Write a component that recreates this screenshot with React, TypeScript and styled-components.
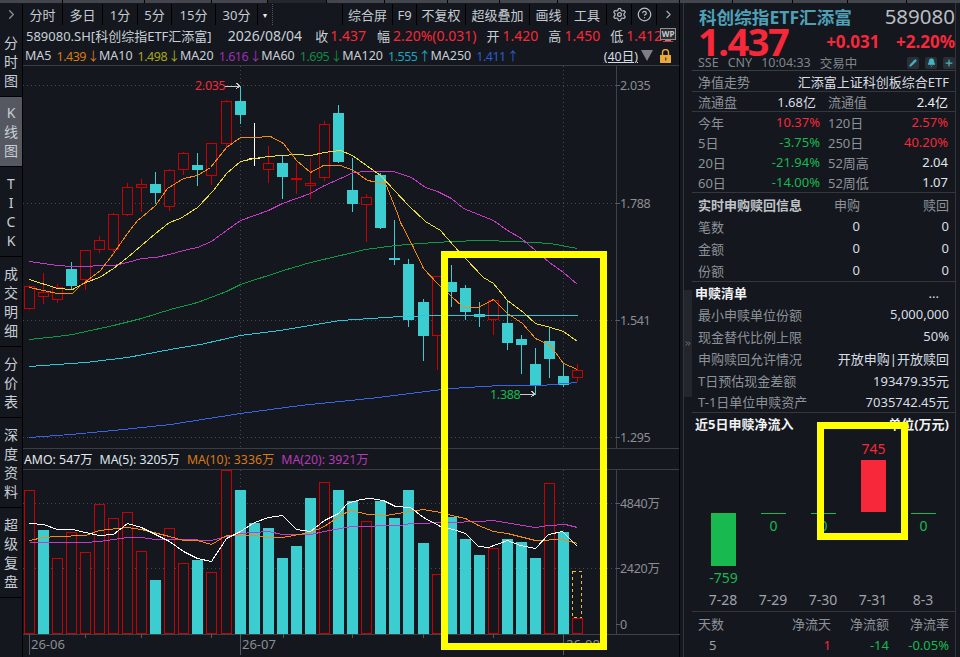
import { Fragment } from 'react'
import styled, { createGlobalStyle } from 'styled-components'
import { ChevronRight, ChevronsRight, CircleHelp, Settings, Pencil, Bell, Plus } from 'lucide-react'

const BG = '#14171d'
const RED = '#f7283a'
const GREEN = '#18b94f'
const TEAL = '#3bcdcf'
const CANDLE_RED = '#cc0000'

const GlobalStyle = createGlobalStyle`
  html, body { margin: 0; padding: 0; background: ${BG}; }
  body { width: 960px; height: 657px; overflow: hidden; font-family: "Noto Sans", "Noto Sans CJK SC", sans-serif; }
`

const Page = styled.div`
  position: relative;
  width: 960px;
  height: 657px;
  overflow: hidden;
  background: ${BG};
  color: #d5dbe2;
`
const TopStrip = styled.div`
  display: flex;
  height: 3px;
  gap: 1px;
  background: #000;
`
const StripTab = styled.div<{ $w: number; $dark?: boolean }>`
  width: ${p => p.$w}px;
  background: ${p => (p.$dark ? '#23262c' : '#43464c')};
`
const Workspace = styled.div`
  display: flex;
  height: 654px;
`
const LeftPane = styled.div`
  width: 680px;
  display: flex;
  flex-direction: column;
`
const Toolbar = styled.div`
  display: flex;
  align-items: center;
  height: 21px;
  margin-top: 1px;
  font-size: 13px;
  color: #c6ccd3;
`
const ToolButton = styled.div<{ $w: number }>`
  width: ${p => p.$w}px;
  height: 100%;
  display: flex;
  align-items: center;
  justify-content: center;
  border-right: 1px solid #000;
  box-sizing: border-box;
  flex: none;
`
const MenuCaret = styled.div`
  width: 14px;
  text-align: center;
  font-size: 8px;
  border-right: 1px dotted #555;
  height: 100%;
  line-height: 21px;
  color: #eee;
`
const ToolSpacer = styled.div`
  flex: 1;
  height: 100%;
  border-right: 1px solid #000;
`
const Body = styled.div`
  flex: 1;
  display: flex;
  min-height: 0;
`
const Sidebar = styled.div`
  width: 22px;
  flex: none;
  padding-top: 1px;
  border-right: 1px solid #000;
`
const SideTab = styled.div<{ $h: number; $active?: boolean }>`
  height: ${p => p.$h}px;
  box-sizing: border-box;
  display: flex;
  flex-direction: column;
  align-items: center;
  justify-content: center;
  border-bottom: 1px solid #000;
  background: ${p => (p.$active ? '#555860' : 'transparent')};
  color: #c8ced6;
  font-size: 14px;
`
const SideChar = styled.span`
  height: 19px;
  line-height: 19px;
`
const ChartColumn = styled.div`
  flex: 1;
  min-width: 0;
  border-right: 1px solid #000;
`
const InfoRow = styled.div`
  display: flex;
  align-items: center;
  height: 21px;
  padding-left: 3px;
  font-size: 14px;
  white-space: nowrap;
  position: relative;
`
const MaRow = styled.div`
  display: flex;
  align-items: center;
  height: 20px;
  box-sizing: border-box;
  padding-left: 2px;
  font-size: 12.5px;
  white-space: nowrap;
  border-bottom: 1px solid #3a3d42;
`
const Tag = styled.span<{ $c?: string; $gap?: number; $size?: number }>`
  color: ${p => p.$c || '#c8d0d8'};
  margin-left: ${p => p.$gap || 0}px;
  ${p => (p.$size ? `font-size: ${p.$size}px;` : '')}
`
const MaValue = styled(Tag)`
  letter-spacing: -0.5px;
`
const TrendArrow = styled.span`
  display: inline-block;
  width: 6px;
  letter-spacing: -3px;
  margin-left: 1px;
`
const RangeLabel = styled.span`
  margin-left: auto;
  color: #d5dbe2;
  text-decoration: underline;
  font-size: 12.5px;
`
const RangeCaret = styled.span`
  width: 0;
  height: 0;
  margin: 0 7px 0 3px;
  border-left: 6px solid transparent;
  border-right: 6px solid transparent;
  border-top: 11px solid #7d7f83;
`
const LockHolder = styled.span`
  margin-right: 8px;
  display: flex;
`
const WpBadge = styled.svg`
  position: absolute;
  right: 3px;
  top: 3px;
`
const PlotSvg = styled.svg`
  display: block;
`
const Legend = styled.div`
  display: flex;
  align-items: center;
  height: 20px;
  padding-left: 1px;
  font-size: 12.3px;
  border-top: 1px solid #3a3d42;
  border-bottom: 1px solid #3a3d42;
  white-space: nowrap;
`
const RightPane = styled.div`
  width: 273px;
  margin-left: 3px;
  border-left: 1px solid #32353b;
  border-right: 1px solid #32353b;
  display: flex;
  position: relative;
  box-sizing: border-box;
  flex: none;
`
const CollapseTab = styled.div`
  width: 8px;
  margin-top: 287px;
  height: 107px;
  background: #23262c;
  color: #9a9ea4;
  display: flex;
  align-items: center;
  justify-content: center;
  flex: none;
`
const RightContent = styled.div`
  flex: 1;
  min-width: 0;
  font-size: 13px;
`
const QuoteHead = styled.div`
  height: 68px;
  padding-left: 6px;
  border-bottom: 1px solid #3a3d42;
  box-sizing: border-box;
`
const NameRow = styled.div`
  display: flex;
  align-items: center;
  justify-content: space-between;
  height: 24px;
  padding-top: 1px;
`
const FundName = styled.div`
  font-size: 17.6px;
  font-weight: 700;
  color: #4fa0b6;
  white-space: nowrap;
  margin-left: 1px;
`
const FundCode = styled.div`
  font-size: 20.5px;
  color: #b9bdc2;
`
const PriceRow = styled.div`
  display: flex;
  align-items: center;
  height: 27px;
`
const BigPrice = styled.div`
  font-size: 38px;
  line-height: 27px;
  font-weight: 700;
  color: ${RED};
  letter-spacing: -1.5px;
`
const Change = styled.div<{ $left: string }>`
  font-size: 17px;
  font-weight: 700;
  color: ${RED};
  margin-left: ${p => p.$left};
  white-space: nowrap;
`
const StatusRow = styled.div`
  display: flex;
  align-items: center;
  height: 15px;
  color: #7f858c;
  font-size: 12.5px;
  gap: 9px;
`
const StatusIcons = styled.div`
  margin-left: auto;
  display: flex;
  gap: 6px;
`
const IconChip = styled.div`
  width: 12px;
  height: 12px;
  display: flex;
  align-items: center;
  justify-content: center;
  background: #2a2e35;
  color: #42b5c8;
  border-radius: 2px;
`
const Block = styled.div<{ $rule?: boolean }>`
  padding: 0 6px;
  ${p => (p.$rule ? 'border-bottom: 1px solid #34373c;' : '')}
`
const Row = styled.div<{ $h?: number; $inset?: number }>`
  display: flex;
  align-items: center;
  justify-content: space-between;
  height: ${p => p.$h || 22}px;
  padding-right: ${p => p.$inset || 0}px;
  color: #d9dee4;
  white-space: nowrap;
`
const Label = styled.span<{ $strong?: boolean; $c?: string }>`
  color: ${p => p.$c || (p.$strong ? '#f0f2f4' : '#8d9299')};
  font-weight: ${p => (p.$strong ? 700 : 400)};
  white-space: nowrap;
`
const SectionTitle = styled(Label)`
  margin-left: -3px;
`
const Value = styled.span<{ $c?: string }>`
  color: ${p => p.$c || '#d9dee4'};
`
const MoreDots = styled.span`
  color: #d9dee4;
  margin-right: 10px;
`
const Stats = styled.div<{ $h: number }>`
  display: grid;
  grid-template-columns: 122px 1fr;
  column-gap: 8px;
  grid-auto-rows: ${p => p.$h}px;
  padding-right: 1px;
`
const ThreeCols = styled.div`
  display: grid;
  grid-template-columns: 100px 62px 89px;
  grid-auto-rows: 22px;
  align-items: center;
  text-align: right;
  & > *:nth-child(3n + 1) {
    text-align: left;
  }
`
const NetChart = styled.div`
  display: grid;
  grid-template-columns: repeat(5, 50px);
  height: 158px;
  text-align: center;
  font-size: 14px;
`
const NetColumn = styled.div<{ $top: number; $c: string }>`
  padding: ${p => p.$top}px 12px 0 13px;
  color: ${p => p.$c};
  display: flex;
  flex-direction: column;
  line-height: 16px;
`
const NetValue = styled.span<{ $before?: number; $after?: number }>`
  margin-top: ${p => p.$before || 0}px;
  margin-bottom: ${p => p.$after || 0}px;
  margin-left: -12px;
  margin-right: -12px;
`
const NetBar = styled.div<{ $h: number; $c: string }>`
  height: ${p => p.$h}px;
  background: ${p => p.$c};
`
const NetAxis = styled.div`
  display: grid;
  grid-template-columns: repeat(5, 50px);
  height: 20px;
  line-height: 18px;
  font-size: 14px;
  text-align: center;
  color: #a0a4aa;
  border-bottom: 1px solid #34373c;
  margin: 0 -6px;
  padding: 0 6px;
`
const FlowTable = styled.div`
  display: grid;
  grid-template-columns: 1fr 58px 58px 60px;
  grid-auto-rows: 21px;
  align-items: center;
  text-align: right;
  padding-top: 1px;
  & > *:nth-child(4n + 1) {
    text-align: left;
  }
`
const DayCount = styled.span`
  padding-left: 11px;
  color: #a0a4aa;
`
const Highlight = styled.div<{ $x: number; $y: number; $w: number; $h: number }>`
  position: absolute;
  left: ${p => p.$x}px;
  top: ${p => p.$y}px;
  width: ${p => p.$w}px;
  height: ${p => p.$h}px;
  box-sizing: border-box;
  border: 7px solid #ffff00;
  pointer-events: none;
`

type Candle = ['r' | 't' | 'w', number, number, number, number]

// kind, body top, body bottom, wick top, wick bottom
const candles: Candle[] = [
  ['r', 286, 308, 285, 310], ['r', 292, 296, 273, 304], ['r', 287, 299, 284, 303], ['t', 269, 286, 262, 289],
  ['r', 250, 279, 250, 290], ['r', 240, 249, 236, 253], ['r', 214, 249, 213, 252], ['r', 187, 214, 183, 216],
  ['r', 184, 187, 179, 212], ['t', 184, 193, 172, 204], ['r', 170, 206, 169, 211], ['r', 153, 169, 152, 175],
  ['t', 165, 170, 153, 186], ['r', 143, 175, 143, 185], ['r', 101, 143, 100, 148], ['t', 101, 115, 86, 124],
  ['w', 158, 159, 123, 166], ['r', 163, 169, 146, 183], ['t', 163, 177, 155, 199], ['r', 178, 179, 163, 194],
  ['r', 183, 185, 158, 199], ['r', 124, 177, 121, 181], ['t', 113, 162, 105, 163], ['t', 190, 204, 158, 212],
  ['r', 197, 204, 194, 242], ['t', 175, 228, 173, 229], ['t', 258, 260, 220, 265], ['t', 264, 320, 259, 327],
  ['t', 302, 336, 299, 361], ['r', 276, 335, 276, 370], ['t', 282, 292, 265, 307], ['t', 288, 312, 285, 320],
  ['t', 314, 317, 302, 327], ['r', 300, 319, 299, 335], ['t', 323, 343, 301, 350], ['t', 339, 345, 335, 374],
  ['t', 364, 385, 348, 395], ['t', 341, 359, 327, 378], ['t', 376, 385, 363, 387], ['r', 370, 377, 364, 382],
]

const volumes: ['r' | 't', number][] = [
  ['r', 490], ['t', 530], ['r', 558], ['r', 532], ['r', 552], ['r', 504], ['r', 518], ['r', 512], ['r', 551], ['t', 580],
  ['r', 528], ['r', 563], ['t', 560], ['r', 572], ['r', 470], ['t', 490], ['t', 523], ['t', 528], ['t', 558], ['t', 546],
  ['t', 498], ['r', 482], ['t', 490], ['t', 501], ['r', 521], ['t', 501], ['t', 518], ['t', 490], ['t', 543], ['r', 574],
  ['t', 517], ['t', 539], ['t', 555], ['r', 548], ['t', 539], ['t', 542], ['t', 558], ['r', 483], ['t', 532], ['r', 618],
]

const priceLines: [string, string][] = [
  ['#0d9a45', '29,339 57,336 72,334 113,325 141,318 170,309 197,302 226,291 240,284 283,270 310,262 340,255 365,249 395,245 420,243 451,241 480,240 515,241 550,243 577,248'],
  ['#2ac6da', '29,366 57,364 85,362 127,357 170,349 200,344 240,335 280,330 310,325 340,320 400,316 440,315 577,315'],
  ['#3566e6', '29,437 70,434 113,430 170,424 240,413 300,405 340,401 378,397 410,393 450,388 500,385 540,385 577,382'],
  ['#c43cc4', '29,261 57,265 72,266 113,265 127,262 141,258 155,257 169,254 183,250 197,247 211,241 226,230 240,220 268,210 282,203 310,193 324,185 340,178 353,172 366,171 393,171 411,177 425,187 437,191 451,198 463,208 493,220 507,230 521,238 535,250 549,262 563,272 577,284'],
  ['#ecdc3c', '29,279 57,288 72,289 85,282 99,277 113,268 127,257 141,245 155,233 169,222 180,218 197,207 213,190 226,173 240,161 254,158 268,156 282,155 296,154 310,155 324,152 340,150 352,155 366,165 380,175 394,190 408,205 425,221 440,230 453,245 465,258 483,277 493,283 507,300 523,312 535,323 550,327 563,331 577,341'],
  ['#f58a12', '29,287 57,293 72,293 80,285 100,270 113,253 127,233 137,220 141,217 155,205 167,188 183,178 197,175 210,167 226,147 240,137 254,137 270,136 283,143 296,160 310,172 323,165 340,165 353,170 367,180 385,183 397,213 400,222 412,245 423,268 437,283 450,295 463,307 478,307 493,299 507,313 522,323 535,338 550,345 563,363 577,369'],
]

const volumeLines: [string, string][] = [
  ['#c43cc4', '29,542 85,542 99,541 127,537 141,537 155,539 183,539 211,540 226,536 240,533 268,531 282,534 310,534 324,531 340,528 352,526 400,525 410,523 450,522 478,521 493,520 510,523 535,527 548,525 565,524 577,527'],
  ['#f58a12', '29,540 43,537 57,536 85,535 99,530 127,527 141,529 169,536 183,540 197,540 211,544 226,535 254,535 268,537 282,537 310,532 324,526 340,515 350,510 368,514 385,515 410,511 423,509 440,512 451,515 465,518 478,525 493,531 507,533 535,540 562,539 577,543'],
  ['#ffffff', '29,523 43,524 57,529 72,529 85,532 99,535 113,534 127,523 141,527 155,534 169,541 183,551 197,558 211,561 226,538 240,531 254,522 268,517 282,515 296,529 310,531 324,520 338,513 347,503 360,499 370,498 383,500 395,506 410,507 423,517 440,526 453,529 465,533 478,546 488,547 507,540 520,545 535,548 548,534 562,531 577,546'],
]

// bars sit 14px apart, with one extra pixel every 14 bars
const centerOf = (i: number) => Math.floor(29 + 14 * i + i / 14)

function Grid({ rows, top, bottom }: { rows: number[]; top: number; bottom: number }) {
  return (
    <g stroke="#474b50" strokeDasharray="1 3" shapeRendering="crispEdges">
      {rows.map(y => <line key={y} x1={23} x2={616} y1={y + 0.5} y2={y + 0.5} />)}
      <line x1={240.5} x2={240.5} y1={top} y2={bottom} />
      <line x1={563.5} x2={563.5} y1={top} y2={bottom} />
    </g>
  )
}

function AxisLabels({ items }: { items: [string, number][] }) {
  return (
    <g fontSize={12.5} letterSpacing={-0.3} fill="#8b8e93">
      <line x1={616.5} x2={616.5} y1={0} y2={660} stroke="#3e4146" />
      {items.map(([text, y]) => (
        <g key={text}>
          <line x1={616} x2={620} y1={y + 0.5} y2={y + 0.5} stroke="#5a5d62" />
          <text x={620} y={y + 5}>{text}</text>
        </g>
      ))}
    </g>
  )
}

function Arrow({ x1, x2, y }: { x1: number; x2: number; y: number }) {
  return (
    <path d={`M${x1} ${y}H${x2}M${x2 - 4} ${y - 3}L${x2} ${y}L${x2 - 4} ${y + 3}`} stroke="#c9cbce" fill="none" shapeRendering="crispEdges" />
  )
}

// red bars are hollow: an outer rect in red with the background inside
function HollowBar({ x, top, bottom }: { x: number; top: number; bottom: number }) {
  const h = Math.max(bottom - top + 1, 2)
  return (
    <>
      <rect x={x - 5} y={top} width={11} height={h} fill={CANDLE_RED} />
      {h > 2 && <rect x={x - 4} y={top + 1} width={9} height={h - 2} fill={BG} />}
    </>
  )
}

function Lines({ items }: { items: [string, string][] }) {
  return (
    <g transform="translate(0.5 0.5)">
      {items.map(([color, points]) => (
        <polyline key={color} points={points} fill="none" stroke={color} strokeWidth={1} />
      ))}
    </g>
  )
}

function PriceChart() {
  return (
    <PlotSvg width={657} height={382} viewBox="23 66 657 382">
      <Grid rows={[85, 203, 320, 437]} top={66} bottom={448} />
      <AxisLabels items={[['2.035', 85], ['1.788', 203], ['1.541', 320], ['1.295', 437]]} />
      <g shapeRendering="crispEdges">
        {candles.map(([kind, top, bottom, wickTop, wickBottom], i) => {
          const x = centerOf(i)
          const color = kind === 'r' ? CANDLE_RED : kind === 't' ? TEAL : '#ffffff'
          return (
            <g key={i}>
              <rect x={x} y={wickTop} width={1} height={wickBottom - wickTop} fill={color} />
              {kind === 'r' ? (
                <HollowBar x={x} top={top} bottom={bottom} />
              ) : (
                <rect x={x - 5} y={top} width={11} height={Math.max(bottom - top, 1)} fill={color} />
              )}
            </g>
          )
        })}
        <Lines items={priceLines} />
      </g>
      <text x={195} y={90} fontSize={12.5} letterSpacing={-0.3} fill={RED}>2.035</text>
      <Arrow x1={225} x2={240} y={86} />
      <text x={490} y={399} fontSize={12.5} letterSpacing={-0.3} fill={GREEN}>1.388</text>
      <Arrow x1={520} x2={535} y={394} />
    </PlotSvg>
  )
}

function VolumeChart() {
  return (
    <PlotSvg width={657} height={164} viewBox="23 470 657 164">
      <Grid rows={[503, 568]} top={470} bottom={634} />
      <AxisLabels items={[['4840万', 503], ['2420万', 568], ['0', 624]]} />
      <g shapeRendering="crispEdges">
        {volumes.map(([kind, top], i) => {
          const x = centerOf(i)
          return kind === 'r' ? (
            <HollowBar key={i} x={x} top={top} bottom={633} />
          ) : (
            <rect key={i} x={x - 5} y={top} width={11} height={634 - top} fill={TEAL} />
          )
        })}
        <rect x={572.5} y={571.5} width={9} height={46} fill="none" stroke="#f0b93a" strokeDasharray="3 3" />
        <Lines items={volumeLines} />
      </g>
    </PlotSvg>
  )
}

function DateAxis() {
  const ticks = [85, 141, 211, 283, 352, 423, 493]
  return (
    <PlotSvg width={657} height={21} viewBox="23 634 657 21">
      <line x1={23} x2={680} y1={634.5} y2={634.5} stroke="#3e4146" />
      <g stroke="#55585d" shapeRendering="crispEdges">
        {ticks.map(x => <line key={x} x1={x + 0.5} x2={x + 0.5} y1={634} y2={638} />)}
        {[29, 240, 563].map(x => <line key={x} x1={x + 0.5} x2={x + 0.5} y1={634} y2={655} />)}
      </g>
      <g fontSize={13} fill="#8b8e93">
        <text x={31} y={649}>26-06</text>
        <text x={242} y={649}>26-07</text>
        <text x={566} y={649}>26-08</text>
      </g>
    </PlotSvg>
  )
}

const sideTabs = [
  { text: '分时图', h: 71 },
  { text: 'K线图', h: 70, active: true },
  { text: 'TICK', h: 90 },
  { text: '成交明细', h: 90 },
  { text: '分价表', h: 71 },
  { text: '深度资料', h: 90 },
  { text: '超级复盘', h: 90 },
]

const stats: [string, string, string][] = [
  ['今年', '10.37%', RED], ['120日', '2.57%', RED],
  ['5日', '-3.75%', GREEN], ['250日', '40.20%', RED],
  ['20日', '-21.94%', GREEN], ['52周高', '2.04', '#e2e6ea'],
  ['60日', '-14.00%', GREEN], ['52周低', '1.07', '#e2e6ea'],
]

const basket: [string, string][] = [
  ['最小申赎单位份额', '5,000,000'],
  ['现金替代比例上限', '50%'],
  ['申购赎回允许情况', '开放申购|开放赎回'],
  ['T日预估现金差额', '193479.35元'],
]

const netFlows = [
  { date: '7-28', value: -759, h: 53 },
  { date: '7-29', value: 0, h: 1 },
  { date: '7-30', value: 0, h: 1 },
  { date: '7-31', value: 745, h: 52 },
  { date: '8-3', value: 0, h: 1 },
]

const maItems: [string, string, string, string][] = [
  ['MA5', '1.439', '↓', '#d97a14'],
  ['MA10', '1.498', '↓', '#a6a81e'],
  ['MA20', '1.616', '↓', '#9c2fb4'],
  ['MA60', '1.695', '↓', '#118a44'],
  ['MA120', '1.555', '↑', '#1ea5bd'],
  ['MA250', '1.411', '↑', '#2a5ccc'],
]

function NetFlowChart() {
  return (
    <>
      <NetChart>
        {netFlows.map(({ date, value, h }) => {
          const color = value > 0 ? RED : GREEN
          return value > 0 ? (
            <NetColumn key={date} $top={8} $c={color}>
              <NetValue $after={3}>{value}</NetValue>
              <NetBar $h={h} $c={color} />
            </NetColumn>
          ) : (
            <NetColumn key={date} $top={80} $c={color}>
              <NetBar $h={h} $c={color} />
              <NetValue $before={4}>{value}</NetValue>
            </NetColumn>
          )
        })}
      </NetChart>
      <NetAxis>
        {netFlows.map(f => <span key={f.date}>{f.date}</span>)}
      </NetAxis>
    </>
  )
}

export default function App() {
  return (
    <Page>
      <GlobalStyle />
      <TopStrip>
        {[62, 81, 66, 55].map((w, i) => <StripTab key={i} $w={w} />)}
        <StripTab $w={58} $dark />
        {[57, 62, 51, 57, 121, 52, 59, 54, 58, 53].map((w, i) => <StripTab key={i} $w={w} />)}
      </TopStrip>
      <Workspace>
        <LeftPane>
          <Toolbar>
            <ToolButton $w={23}><ChevronRight size={15} color="#8c9096" /></ToolButton>
            <ToolButton $w={40}>分时</ToolButton>
            <ToolButton $w={40}>多日</ToolButton>
            <ToolButton $w={35}>1分</ToolButton>
            <ToolButton $w={34}>5分</ToolButton>
            <ToolButton $w={44}>15分</ToolButton>
            <ToolButton $w={42}>30分</ToolButton>
            <MenuCaret>▾</MenuCaret>
            <ToolSpacer />
            <ToolButton $w={50}>综合屏</ToolButton>
            <ToolButton $w={24}>F9</ToolButton>
            <ToolButton $w={49}>不复权</ToolButton>
            <ToolButton $w={64}>超级叠加</ToolButton>
            <ToolButton $w={38}>画线</ToolButton>
            <ToolButton $w={39}>工具</ToolButton>
            <ToolButton $w={25}><Settings size={15} color="#b9bec4" /></ToolButton>
            <ToolButton $w={25}><CircleHelp size={15} color="#b9bec4" /></ToolButton>
            <ToolButton $w={23}><ChevronRight size={13} color="#a8acb2" /></ToolButton>
          </Toolbar>
          <Body>
            <Sidebar>
              {sideTabs.map(tab => (
                <SideTab key={tab.text} $h={tab.h} $active={tab.active}>
                  {[...tab.text].map(ch => <SideChar key={ch}>{ch}</SideChar>)}
                </SideTab>
              ))}
            </Sidebar>
            <ChartColumn>
              <InfoRow>
                <Tag $size={13}>589080.SH[科创综指ETF汇添富]</Tag>
                <Tag $gap={16}>2026/08/04</Tag>
                <Tag $gap={13} $size={13}>收</Tag>
                <Tag $c={RED} $gap={2}>1.437</Tag>
                <Tag $gap={11} $size={13}>幅</Tag>
                <Tag $c={RED} $gap={3}>2.20%(0.031)</Tag>
                <Tag $gap={10} $size={13}>开</Tag>
                <Tag $c={RED} $gap={3}>1.420</Tag>
                <Tag $gap={10} $size={13}>高</Tag>
                <Tag $c={RED} $gap={3}>1.450</Tag>
                <Tag $gap={10} $size={13}>低</Tag>
                <Tag $c={RED} $gap={3}>1.412</Tag>
                <WpBadge width={16} height={16} viewBox="0 0 16 16">
                  <rect x="0.5" y="0.5" width="15" height="11" fill="#2a2c30" stroke="#8d8f92" />
                  <text x="8" y="9" textAnchor="middle" fontSize="8" fontWeight="700" fill="#c9cbce">WP</text>
                  <rect x="5" y="12" width="6" height="1" fill="#8d8f92" />
                  <rect x="3" y="13" width="10" height="1" fill={RED} />
                </WpBadge>
              </InfoRow>
              <MaRow>
                {maItems.map(([name, value, arrow, color], i) => (
                  <Fragment key={name}>
                    <Tag $gap={i ? 6 : 0}>{name}</Tag>
                    <MaValue $c={color} $gap={5}>{value}<TrendArrow>{arrow}</TrendArrow></MaValue>
                  </Fragment>
                ))}
                <RangeLabel>(40日)</RangeLabel>
                <RangeCaret />
                <LockHolder>
                  <svg width="11" height="14" viewBox="0 0 11 14">
                    <path d="M2.5 6V3.5a3 3 0 0 1 6 0V6" fill="none" stroke="#e9a93c" strokeWidth="1.4" />
                    <rect x="0" y="6" width="11" height="8" fill="#e9a93c" />
                    <rect x="5" y="8.5" width="1.4" height="3" fill="#5c4418" />
                  </svg>
                </LockHolder>
              </MaRow>
              <PriceChart />
              <Legend>
                <Tag $c="#e4e8ec">AMO: 547万</Tag>
                <Tag $c="#dfe6ee" $gap={7}>MA(5): 3205万</Tag>
                <Tag $c="#d97a14" $gap={7}>MA(10): 3336万</Tag>
                <Tag $c="#b83ab8" $gap={7}>MA(20): 3921万</Tag>
              </Legend>
              <VolumeChart />
              <DateAxis />
            </ChartColumn>
          </Body>
        </LeftPane>
        <RightPane>
          <CollapseTab><ChevronsRight size={9} /></CollapseTab>
          <RightContent>
            <QuoteHead>
              <NameRow>
                <FundName>科创综指ETF汇添富</FundName>
                <FundCode>589080</FundCode>
              </NameRow>
              <PriceRow>
                <BigPrice>1.437</BigPrice>
                <Change $left="38px">+0.031</Change>
                <Change $left="auto">+2.20%</Change>
              </PriceRow>
              <StatusRow>
                <span>SSE</span>
                <span>CNY</span>
                <span>10:04:33</span>
                <span>交易中</span>
                <StatusIcons>
                  <IconChip><Pencil size={8} fill="currentColor" /></IconChip>
                  <IconChip><Bell size={9} fill="currentColor" /></IconChip>
                  <IconChip><Plus size={10} strokeWidth={3} /></IconChip>
                </StatusIcons>
              </StatusRow>
            </QuoteHead>
            <Block $rule>
              <Row $h={20}>
                <Label>净值走势</Label>
                <Value>汇添富上证科创板综合ETF</Value>
              </Row>
            </Block>
            <Block $rule>
              <Stats $h={19}>
                <Row $h={19} $inset={4}><Label>流通盘</Label><Value>1.68亿</Value></Row>
                <Row $h={19}><Label>流通值</Label><Value $c="#eef0f2">2.4亿</Value></Row>
              </Stats>
            </Block>
            <Block $rule>
              <Stats $h={20}>
                {stats.map(([label, value, color]) => (
                  <Row key={label} $h={20}><Label>{label}</Label><Value $c={color}>{value}</Value></Row>
                ))}
              </Stats>
            </Block>
            <Block $rule>
              <ThreeCols>
                <Label $strong $c="#bfc3c8">实时申购赎回信息</Label><Label>申购</Label><Label>赎回</Label>
                {['笔数', '金额', '份额'].map(name => (
                  <Fragment key={name}>
                    <Label>{name}</Label><Value>0</Value><Value>0</Value>
                  </Fragment>
                ))}
              </ThreeCols>
            </Block>
            <Block $rule>
              <Row $h={21}>
                <SectionTitle $strong>申赎清单</SectionTitle>
                <MoreDots>...</MoreDots>
              </Row>
              {basket.map(([label, value]) => (
                <Row key={label}><Label>{label}</Label><Value>{value}</Value></Row>
              ))}
              <Row $h={21}><Label>T-1日单位申赎资产</Label><Value>7035742.45元</Value></Row>
            </Block>
            <Block>
              <Row $h={20}>
                <SectionTitle $strong>近5日申赎净流入</SectionTitle>
                <Label $strong>单位(万元)</Label>
              </Row>
              <NetFlowChart />
              <FlowTable>
                <Label>天数</Label><Label>净流天</Label><Label>净流额</Label><Label>净流率</Label>
                <DayCount>5</DayCount><Value $c={RED}>1</Value><Value $c={GREEN}>-14</Value><Value $c={GREEN}>-0.05%</Value>
              </FlowTable>
            </Block>
          </RightContent>
        </RightPane>
      </Workspace>
      <Highlight $x={441} $y={251} $w={166} $h={399} />
      <Highlight $x={817} $y={422} $w={91} $h={118} />
    </Page>
  )
}
